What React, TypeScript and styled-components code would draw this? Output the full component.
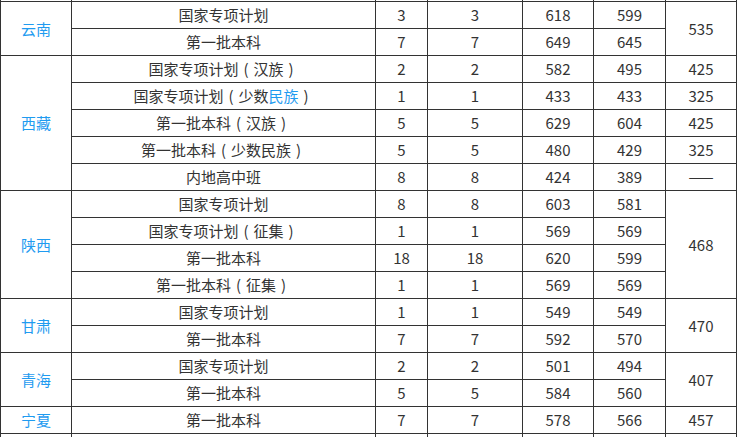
import { ReactNode } from "react";
import styled, { createGlobalStyle } from "styled-components";

const GlobalStyle = createGlobalStyle`
  html, body {
    margin: 0;
    padding: 0;
    background: #fff;
  }
  body {
    font-family: "Noto Sans CJK SC", "Noto Sans", sans-serif;
    color: #333;
  }
`;

const Frame = styled.div`
  height: 437px;
  overflow: hidden;
`;

const Table = styled.table`
  width: 737px;
  margin-top: -26px;
  border-collapse: collapse;
  table-layout: fixed;
  font-size: 15px;
`;

const Row = styled.tr`
  height: 27px;
`;

const Cell = styled.td<{ $link?: boolean }>`
  border: 1px solid #333;
  padding: 0;
  text-align: center;
  vertical-align: middle;
  line-height: 20px;
  white-space: nowrap;
  color: ${(p) => (p.$link ? "#1f9bf0" : "#333")};
`;

const Link = styled.span`
  color: #1f9bf0;
`;

// full-width bracket with the glyph centred in its box
const Paren = styled.span`
  display: inline-block;
  width: 1em;
  text-align: center;
`;

const Note = ({ children }: { children: ReactNode }) => (
  <>
    <Paren>(</Paren>
    {children}
    <Paren>)</Paren>
  </>
);

interface Line {
  plan: ReactNode;
  a: string;
  b: string;
  hi: string;
  lo: string;
}

interface Province {
  name: string;
  lines: Line[];
  // either one shared cutoff, or one per line
  cutoff: ReactNode[];
}

const provinces: Province[] = [
  {
    name: "云南",
    lines: [
      { plan: "国家专项计划", a: "3", b: "3", hi: "618", lo: "599" },
      { plan: "第一批本科", a: "7", b: "7", hi: "649", lo: "645" },
    ],
    cutoff: ["535"],
  },
  {
    name: "西藏",
    lines: [
      { plan: <>国家专项计划<Note>汉族</Note></>, a: "2", b: "2", hi: "582", lo: "495" },
      {
        plan: (
          <>
            国家专项计划<Note>少数<Link>民族</Link></Note>
          </>
        ),
        a: "1",
        b: "1",
        hi: "433",
        lo: "433",
      },
      { plan: <>第一批本科<Note>汉族</Note></>, a: "5", b: "5", hi: "629", lo: "604" },
      { plan: <>第一批本科<Note>少数民族</Note></>, a: "5", b: "5", hi: "480", lo: "429" },
      { plan: "内地高中班", a: "8", b: "8", hi: "424", lo: "389" },
    ],
    cutoff: ["425", "325", "425", "325", "——"],
  },
  {
    name: "陕西",
    lines: [
      { plan: "国家专项计划", a: "8", b: "8", hi: "603", lo: "581" },
      { plan: <>国家专项计划<Note>征集</Note></>, a: "1", b: "1", hi: "569", lo: "569" },
      { plan: "第一批本科", a: "18", b: "18", hi: "620", lo: "599" },
      { plan: <>第一批本科<Note>征集</Note></>, a: "1", b: "1", hi: "569", lo: "569" },
    ],
    cutoff: ["468"],
  },
  {
    name: "甘肃",
    lines: [
      { plan: "国家专项计划", a: "1", b: "1", hi: "549", lo: "549" },
      { plan: "第一批本科", a: "7", b: "7", hi: "592", lo: "570" },
    ],
    cutoff: ["470"],
  },
  {
    name: "青海",
    lines: [
      { plan: "国家专项计划", a: "2", b: "2", hi: "501", lo: "494" },
      { plan: "第一批本科", a: "5", b: "5", hi: "584", lo: "560" },
    ],
    cutoff: ["407"],
  },
  {
    name: "宁夏",
    lines: [{ plan: "第一批本科", a: "7", b: "7", hi: "578", lo: "566" }],
    cutoff: ["457"],
  },
];

const widths = [71, 304, 52, 95, 71, 72, 71];

const EmptyRow = () => (
  <Row>
    {widths.map((_, i) => (
      <Cell key={i} />
    ))}
  </Row>
);

export default function App() {
  return (
    <>
      <GlobalStyle />
      <Frame>
        <Table>
          <colgroup>
            {widths.map((w, i) => (
              <col key={i} style={{ width: w }} />
            ))}
          </colgroup>
          <tbody>
            <EmptyRow />
            {provinces.map((p) =>
              p.lines.map((l, i) => {
                const shared = p.cutoff.length === 1;
                return (
                  <Row key={p.name + i}>
                    {i === 0 && (
                      <Cell $link rowSpan={p.lines.length}>
                        {p.name}
                      </Cell>
                    )}
                    <Cell>{l.plan}</Cell>
                    <Cell>{l.a}</Cell>
                    <Cell>{l.b}</Cell>
                    <Cell>{l.hi}</Cell>
                    <Cell>{l.lo}</Cell>
                    {shared ? (
                      i === 0 && <Cell rowSpan={p.lines.length}>{p.cutoff[0]}</Cell>
                    ) : (
                      <Cell>{p.cutoff[i]}</Cell>
                    )}
                  </Row>
                );
              })
            )}
            <EmptyRow />
          </tbody>
        </Table>
      </Frame>
    </>
  );
}
